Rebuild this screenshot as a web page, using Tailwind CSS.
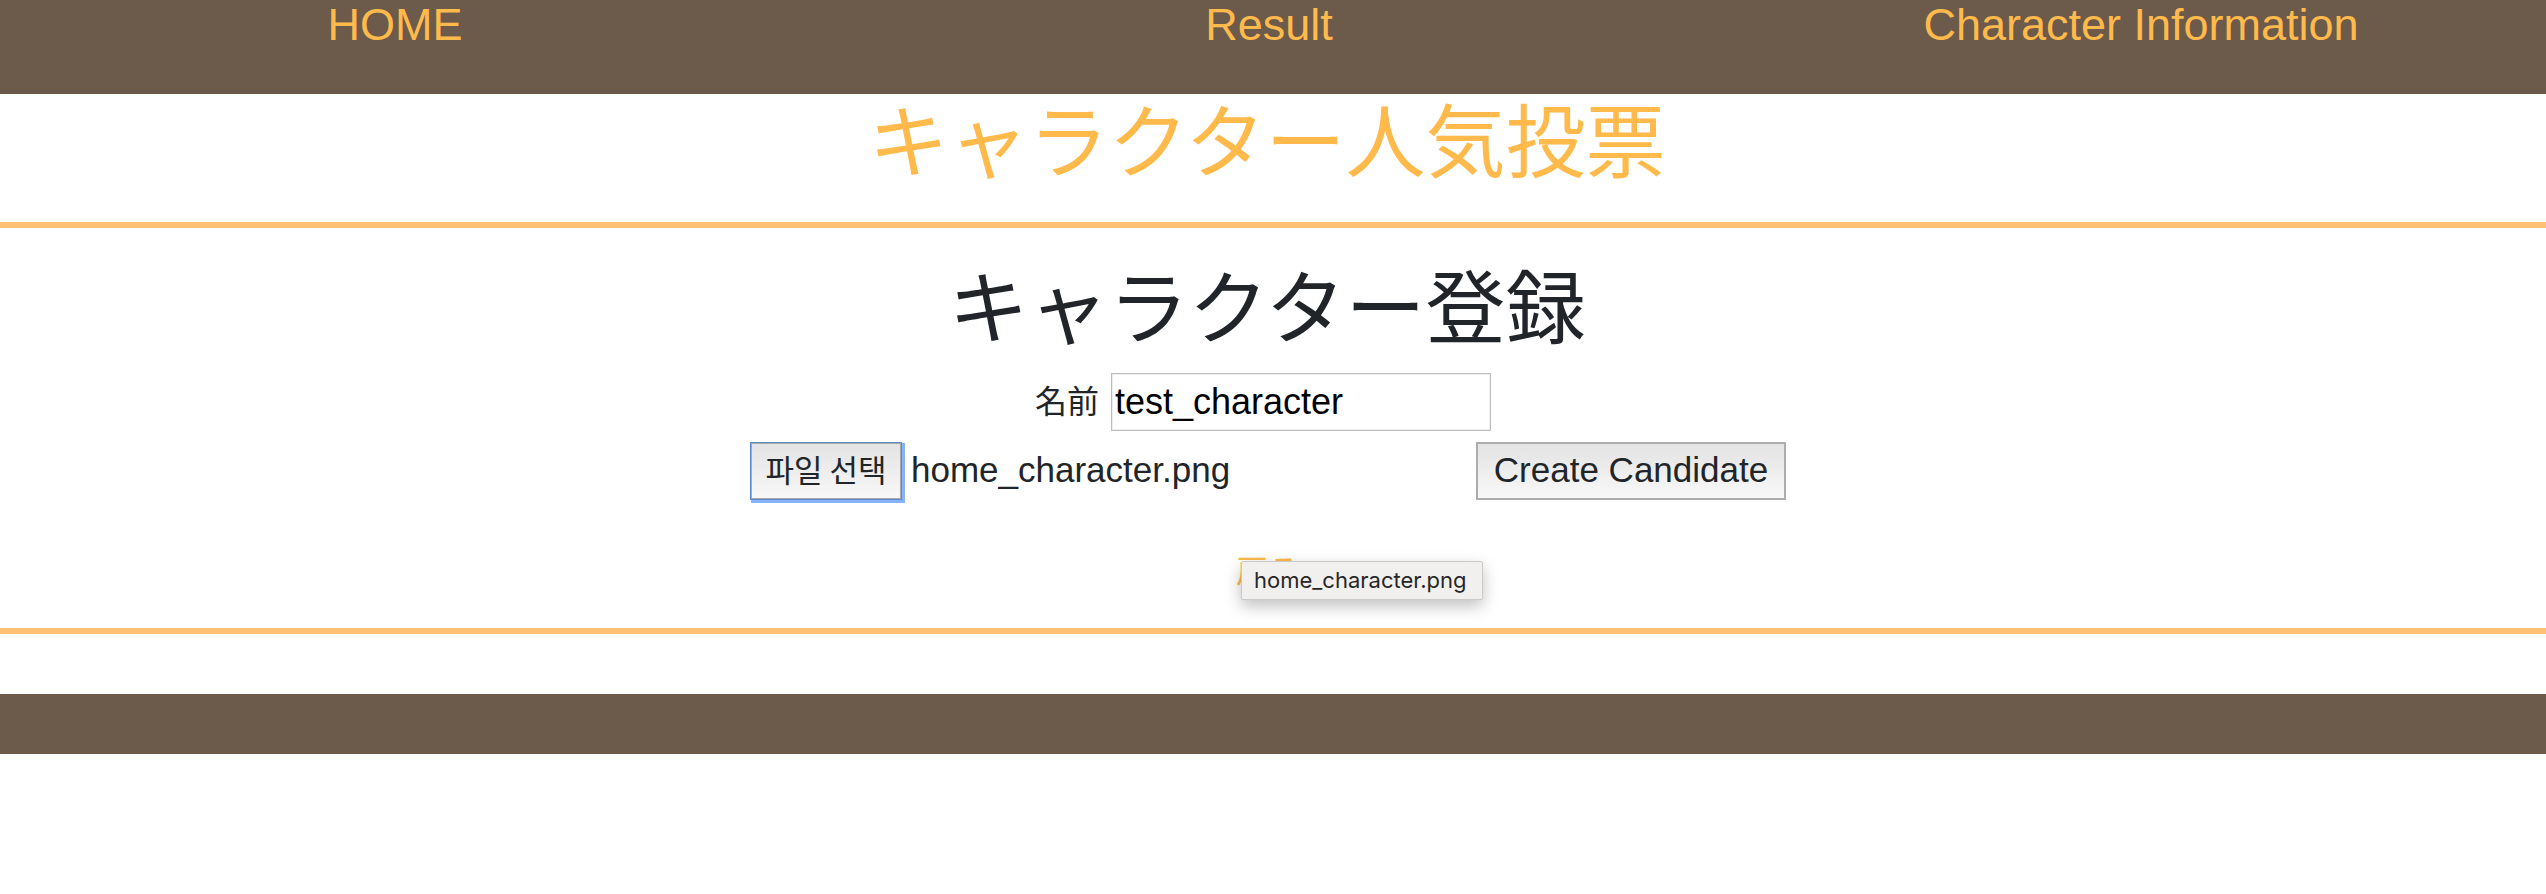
<!DOCTYPE html>
<html lang="ja">
<head>
<meta charset="utf-8">
<title>キャラクター人気投票</title>
<script src="https://cdn.jsdelivr.net/npm/@tailwindcss/browser@4"></script>
</head>
<body class="bg-white text-[#212529] font-['Liberation_Sans','Noto_Sans_CJK_JP',sans-serif]">
  <header class="h-[94px] bg-[#6c5b4b]">
    <nav class="grid grid-cols-[790fr_958fr_786fr] pr-3 text-center text-[45px] leading-[50px] text-[#ffba4b]">
      <div><a href="#">HOME</a></div>
      <div><a href="#">Result</a></div>
      <div><a href="#">Character Information</a></div>
    </nav>
  </header>
  <main>
    <h1 class="h-32 pr-3 text-center text-[80px] leading-[100px] text-[#ffba4b]">キャラクター人気投票</h1>
    <hr class="border-0 h-1.5 bg-[#ffc274]">
    <section class="pt-8">
      <h2 class="pr-3 text-center text-[80px] leading-[100px]">キャラクター登録</h2>
      <form class="mt-[13px]">
        <div class="flex items-center justify-center gap-3 pr-5">
          <label for="name" class="text-[32px] leading-[48px]">名前</label>
          <input id="name" type="text" value="test_character" class="h-[58px] w-[380px] border border-[#bdbdbd] bg-white px-[3px] text-[36px] text-black shadow-[inset_0_0_0_1px_#eeeeee]">
        </div>
        <div class="mt-[11px] flex items-center justify-center pr-[10px] text-[35px] leading-[48px]">
          <div class="flex w-[726px] items-center gap-[9px]">
            <input id="image" type="file" class="sr-only">
            <label for="image" class="flex h-[58px] w-[152px] items-center justify-center border border-[#5a8bcb] bg-linear-to-b from-[#e3e3e3] to-[#f8f8f8] pb-1 text-[31px] font-['Noto_Sans_CJK_KR',sans-serif] shadow-[inset_0_0_0_1px_#a8a8a8,2px_2px_0_1px_#85b2f8]">파일 선택</label>
            <span class="pb-0.5">home_character.png</span>
          </div>
          <button type="submit" class="h-[58px] w-[310px] border-2 border-[#adadad] bg-linear-to-b from-[#e3e3e3] to-[#f8f8f8] pb-0.5">Create Candidate</button>
        </div>
      </form>
      <div class="relative mt-12 h-20 pr-[10px] text-center text-[32px] leading-[48px]">
        <a href="#" class="text-[#ffba4b]">戻る</a>
        <div role="tooltip" class="absolute left-1/2 top-[13px] -ml-8 h-[39px] rounded-[2px] border border-[#c9c9c9] bg-[#f1f0ef] pl-3 pr-4 font-[Inter,sans-serif] text-[22px] leading-[37px] text-[#262626] shadow-[0_6px_16px_rgba(0,0,0,0.25)]">home_character.png</div>
      </div>
    </section>
    <hr class="border-0 h-1.5 bg-[#ffc274]">
  </main>
  <footer class="mt-[60px] h-[60px] bg-[#6c5b4b]"></footer>
</body>
</html>
